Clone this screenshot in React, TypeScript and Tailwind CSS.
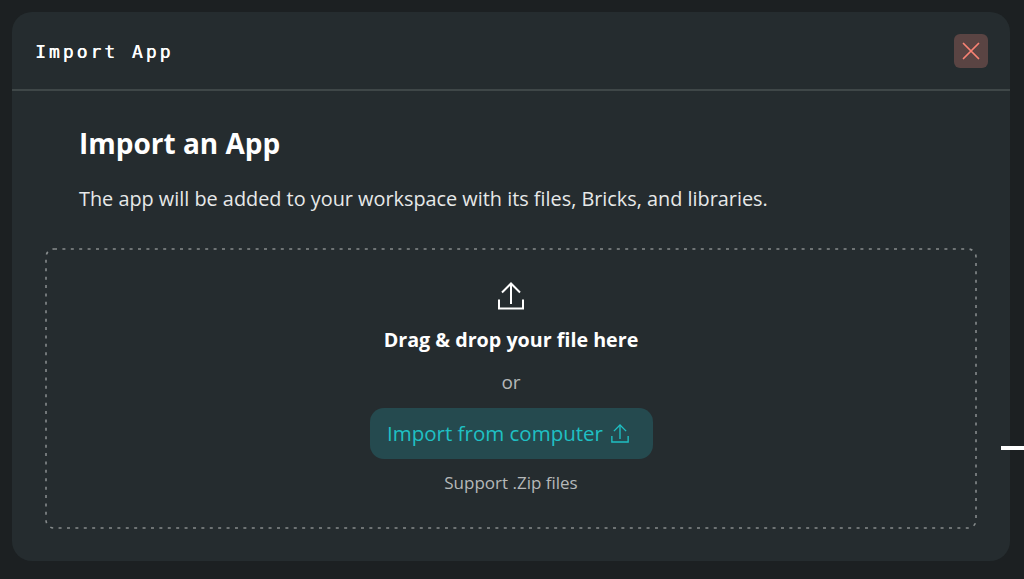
function UploadIcon({ className }: { className: string }) {
  return (
    <svg viewBox="0 0 26 28" fill="none" stroke="currentColor" strokeWidth="2" className={className}>
      <path d="M13 22V2" />
      <path d="M4 10.5l9-9 9 9" />
      <path d="M1 17.5V26.5h24V17.5" />
    </svg>
  );
}

function CloseIcon() {
  return (
    <svg viewBox="0 0 18 18" fill="none" stroke="currentColor" strokeWidth="1.75" strokeLinecap="round" className="h-[18px] w-[18px]">
      <path d="M1.5 1.5l15 15M16.5 1.5l-15 15" />
    </svg>
  );
}

export default function App() {
  return (
    <div className="relative h-[579px] w-[1024px] overflow-hidden bg-[#1c2022] pt-3 pl-3 font-['Open_Sans',sans-serif]">
      {/* Modal */}
      <div className="flex h-[549px] w-[998px] flex-col rounded-[20px] bg-[#252c2f]">
        <div className="flex h-[79px] shrink-0 items-center justify-between border-b-2 border-[#3f4748] pr-[22px] pl-[23px]">
          <h2 className="mt-px font-['DejaVu_Sans_Mono',monospace] text-[18px] tracking-[3.0px] text-white [text-shadow:0.4px_0_0_#fff]">
            Import App
          </h2>
          <button type="button" className="flex h-[34px] w-[34px] items-center justify-center rounded-md bg-[#5a4443] text-[#f98274]">
            <CloseIcon />
          </button>
        </div>

        <div className="px-[33px]">
          <div className="px-[34px] pt-[33px]">
            <h1 className="text-[28px] leading-[38px] font-bold text-white">Import an App</h1>
            <p className="mt-6 text-[19.85px] leading-[26px] text-[#e7e9e9]">
              The app will be added to your workspace with its files, Bricks, and libraries.
            </p>
          </div>

          {/* Dropzone */}
          <div className="relative mt-9 flex h-[281px] w-[932px] flex-col items-center pt-[34px]">
            <svg className="absolute inset-0 h-full w-full text-[#868b8c]" fill="none">
              <rect x="1" y="1" width="930" height="279" rx="8" stroke="currentColor" strokeWidth="1.6" strokeDasharray="3 5.4" />
            </svg>
            <UploadIcon className="h-7 w-[26px] text-white" />
            <p className="mt-[17px] text-[19.7px] leading-[26px] font-bold text-white">Drag &amp; drop your file here</p>
            <p className="mt-4 text-[19px] leading-[26px] text-[#b5b8b9]">or</p>
            <button
              type="button"
              className="mt-[13px] flex h-[51px] w-[283px] items-center justify-center gap-2 rounded-[14px] bg-[#254a4f] pr-[6px] text-[20.5px] text-[#1fc0c4]"
            >
              Import from computer
              <UploadIcon className="h-[19px] w-[18px]" />
            </button>
            <p className="mt-3 text-[17px] leading-6 text-[#b5b8b9]">Support .Zip files</p>
          </div>
        </div>
      </div>

      {/* Edge of the slider behind the modal */}
      <div className="absolute top-[446px] right-0 h-1 w-[23px] bg-white" />
    </div>
  );
}
